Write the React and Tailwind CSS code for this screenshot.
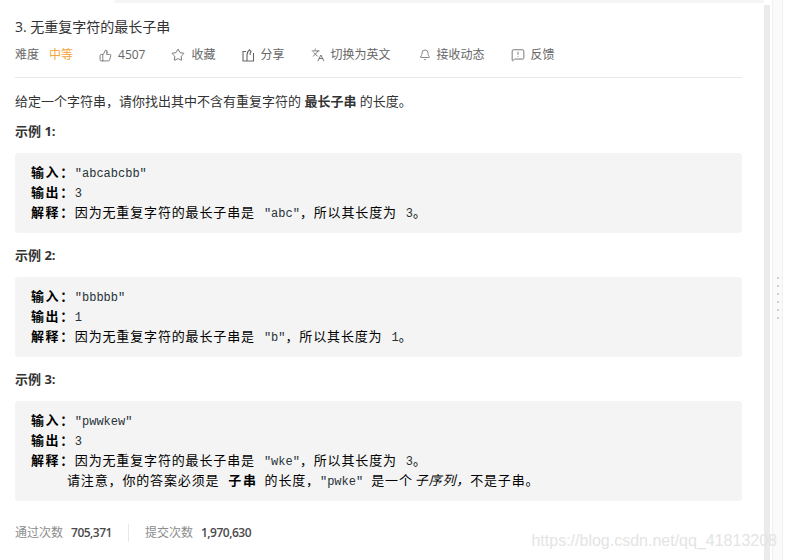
import { ThumbsUp, Star, Languages, Bell, MessageSquareWarning } from 'lucide-react'

const sans = "font-['Open_Sans','Noto_Sans_CJK_SC',sans-serif]"

function ShareIcon() {
  return (
    <svg width="13" height="13" viewBox="0 0 13 13" fill="none" stroke="#666" strokeWidth="1.1">
      <path d="M4 2.500H1v9.500h10.500V4" />
      <path d="M5 12V6c0-2 1-4 2.500-5.200L9 2.500C8 3.500 8 4.500 8 6" />
    </svg>
  )
}

function MetaItem({ icon, text }) {
  return (
    <div className="flex items-center gap-[6px]">
      {icon}
      <span>{text}</span>
    </div>
  )
}

// CJK runs in the example blocks are spaced wider than the mono latin text
function Z({ children }) {
  return <span className="font-['Noto_Sans_CJK_SC',sans-serif] text-[13px] tracking-[0.85px]">{children}</span>
}

function B({ children }) {
  return <span className="font-['Noto_Sans_CJK_SC',sans-serif] text-[13px] font-bold tracking-[1.6px]">{children}</span>
}

// latin run between CJK, with the wider gaps seen in the reference
function L({ children, left = 0 }) {
  return <span className="inline-block text-[#263238]" style={{ marginLeft: left }}>{children}</span>
}

function Line({ children }) {
  return <div className="h-[20px] overflow-visible">{children}</div>
}

function Example({ title, input, output, explain, extra, first }) {
  return (
    <>
      <h4 className={`${first ? 'mt-[10px]' : 'mt-[12px]'} h-[20px] text-[13px] leading-[20px] font-bold text-[#333]`}>{title}</h4>
      <div className="mt-[12px] rounded-[3px] bg-[#f4f4f4] px-[16px] pt-[9px] pb-[11px] font-['Liberation_Mono',monospace] text-[12px] leading-[20px] text-black whitespace-pre">
        <Line><B>输入：</B><L>{input}</L></Line>
        <Line><B>输出：</B><L>{output}</L></Line>
        <Line>{explain}</Line>
        {extra && <Line>{extra}</Line>}
      </div>
    </>
  )
}

function explainLine(code, len) {
  return (
    <>
      <B>解释：</B><Z>因为无重复字符的最长子串是</Z><L left={9}>{code}</L><Z>，所以其长度为</Z><L left={9}>{len}</L><Z>。</Z>
    </>
  )
}

export default function App() {
  const iconCls = 'text-[#666]'
  return (
    <div className={`relative flex h-[560px] w-[786px] overflow-hidden bg-white ${sans}`}>
      <div className="w-[764px] shrink-0">
        <div className="ml-[114px] h-[3px] bg-[#f5f5f5]" />
        <div className="pl-[15px] pr-[22px]">
          <h3 className="mt-[14px] h-[20px] text-[14px] leading-[20px] text-[#333]">3. 无重复字符的最长子串</h3>
          <div className="mt-[8px] flex h-[20px] items-center gap-[26px] text-[12px] text-[#666]">
            <div className="flex gap-[10px]">
              <span>难度</span>
              <span className="text-[#f5a33b]">中等</span>
            </div>
            <MetaItem icon={<ThumbsUp size={13} strokeWidth={1.5} className={iconCls} />} text="4507" />
            <MetaItem icon={<Star size={14} strokeWidth={1.5} className={iconCls} />} text="收藏" />
            <MetaItem icon={<ShareIcon />} text="分享" />
            <MetaItem icon={<Languages size={14} strokeWidth={1.5} className={iconCls} />} text="切换为英文" />
            <MetaItem icon={<Bell size={12} strokeWidth={1.5} className={`ml-[2px] ${iconCls}`} />} text="接收动态" />
            <MetaItem icon={<MessageSquareWarning size={14} strokeWidth={1.5} className={iconCls} />} text="反馈" />
          </div>
          <div className="mt-[12px] h-px bg-[#e8e8e8]" />
          <p className="mt-[13px] h-[20px] text-[13px] leading-[20px] text-[#333]">
            给定一个字符串，请你找出其中不含有重复字符的 <strong className="font-bold">最长子串</strong> 的长度。
          </p>
          <Example first title="示例 1:" input={'"abcabcbb"'} output="3" explain={explainLine('"abc"', '3')} />
          <Example title="示例 2:" input={'"bbbbb"'} output="1" explain={explainLine('"b"', '1')} />
          <Example
            title="示例 3:"
            input={'"pwwkew"'}
            output="3"
            explain={explainLine('"wke"', '3')}
            extra={
              <span className="ml-[36px]">
                <Z>请注意，你的答案必须是</Z><span className="ml-[9px]"><B>子串</B></span><span className="ml-[7px]"><Z>的长度，</Z></span><L>"pwke"</L><span className="ml-[8px]"><Z>是一个</Z></span><em className="ml-[2px] italic"><Z>子序列，</Z></em><Z>不是子串。</Z>
              </span>
            }
          />
          <div className="mt-[23px] flex h-[18px] items-center text-[12px] text-[#8c8c8c]">
            <span>通过次数</span>
            <span className="ml-[8px] font-semibold text-[#4a4a4a] tracking-[-0.5px]">705,371</span>
            <div className="ml-[16px] h-[18px] w-px bg-[#e8e8e8]" />
            <span className="ml-[16px]">提交次数</span>
            <span className="ml-[8px] font-semibold text-[#4a4a4a] tracking-[-0.5px]">1,970,630</span>
          </div>
        </div>
      </div>

      {/* scrollbar + drag handle column */}
      <div className="mt-[5px] w-[6px] shrink-0 bg-[#ebebeb]" />
      <div className="ml-[2px] flex w-[11px] shrink-0 flex-col items-center gap-[6px] border-x border-[#f0f0f0] bg-[#fafafa] pt-[277px]">
        {[0, 1, 2, 3, 4, 5].map((i) => (
          <div key={i} className="h-[2px] w-[2px] bg-[#cfcfcf]" />
        ))}
      </div>

      <span className="absolute right-[9px] top-[531px] font-['Liberation_Sans',sans-serif] text-[16px] leading-[20px] text-[#e4e4e4]">
        https://blog.csdn.net/qq_41813208
      </span>
    </div>
  )
}
